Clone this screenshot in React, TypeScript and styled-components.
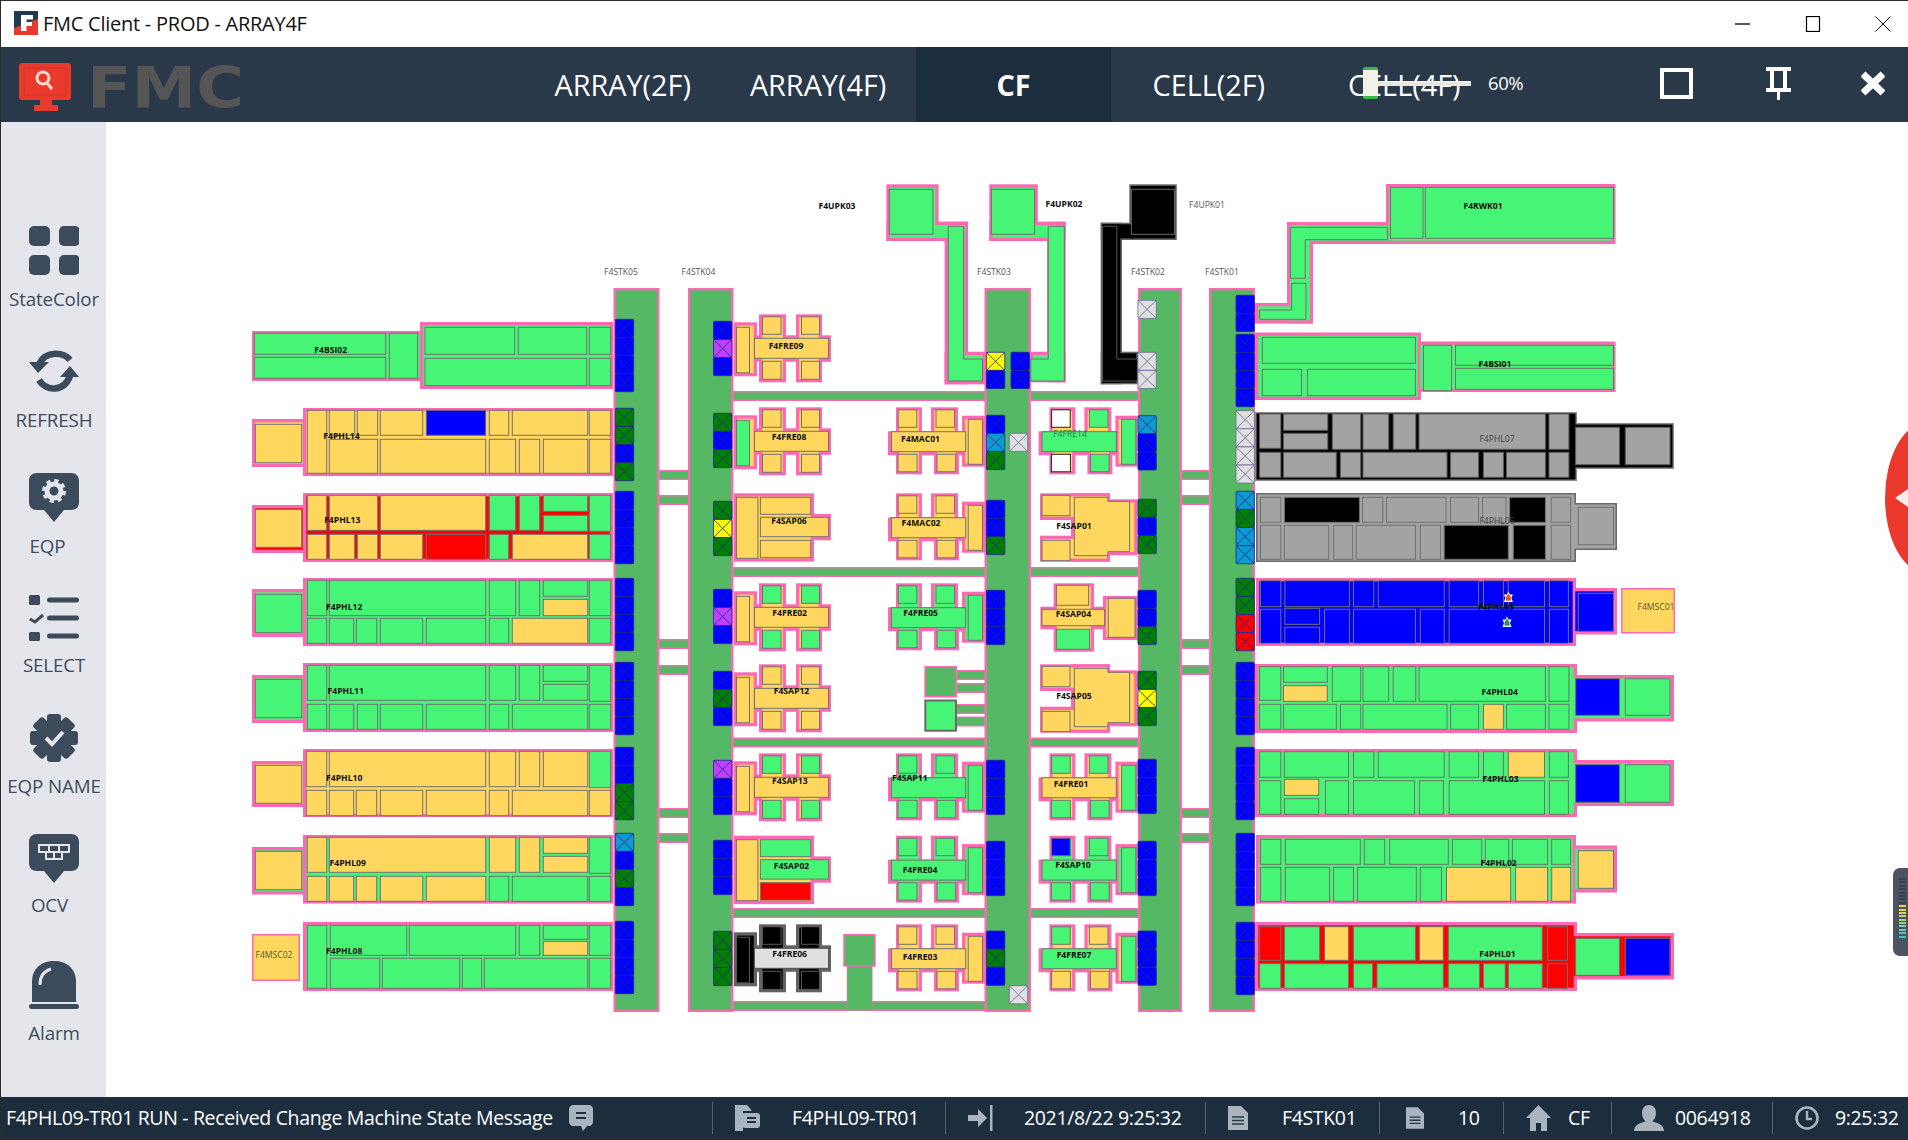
import React from "react"
import styled, { createGlobalStyle } from "styled-components"

const GlobalStyle = createGlobalStyle`
    html, body { margin: 0; padding: 0; background: #2b2b2b; overflow: hidden; }
    #root { width: 1908px; height: 1140px; }
`

const Window = styled.div`
    width: 1908px;
    height: 1140px;
    padding: 1px 0 2px 1px;
    box-sizing: border-box;
    display: flex;
    flex-direction: column;
    font-family: "Open Sans", "Noto Sans", sans-serif;
    overflow: hidden;
    position: relative;
`
const TitleBar = styled.div`
    height: 46px;
    flex: none;
    background: #fff;
    display: flex;
    align-items: center;
    padding: 0 0 2px 13px;
    box-sizing: border-box;
    gap: 5px;
    position: relative;
`
const TitleText = styled.span`
    font-size: 20px;
    color: #111;
    letter-spacing: -0.25px;
`
const WinButtons = styled.div`
    position: absolute;
    top: 0;
    right: 17px;
    height: 46px;
    display: flex;
    align-items: center;
    gap: 54px;
`
const Header = styled.header`
    height: 75px;
    flex: none;
    background: #29394a;
    display: flex;
    position: relative;
`
const LogoBox = styled.div`
    position: absolute;
    left: 18px;
    top: 0;
`
const Tabs = styled.nav`
    margin-left: 524px;
    display: flex;
`
const Tab = styled.div<{ $active?: boolean }>`
    width: 195.4px;
    height: 75px;
    line-height: 75px;
    text-align: center;
    color: #fff;
    font-size: 28.8px;
    font-weight: ${p => (p.$active ? 700 : 400)};
    background: ${p => (p.$active ? "#1c2d3e" : "transparent")};
`
const Opacity = styled.div`
    position: absolute;
    left: 1362px;
    top: 20px;
    width: 165px;
    height: 32px;
`
const Track = styled.div`
    position: absolute;
    left: 6px;
    top: 14px;
    width: 102px;
    height: 5px;
    background: #e8e8e2;
    border-top: 1px solid #f6f6f2;
    box-sizing: border-box;
`
const Thumb = styled.div`
    position: absolute;
    left: 0;
    top: 0;
    width: 15px;
    height: 32px;
    border-radius: 2px;
    background: #f1f1ea;
    border-top: 3px solid #3fb34f;
    border-bottom: 3px solid #3fb34f;
    box-sizing: border-box;
`
const Percent = styled.span`
    position: absolute;
    left: 125px;
    top: 3px;
    color: #fff;
    font-size: 18.5px;
    letter-spacing: -0.4px;
`
const HeaderTools = styled.div`
    position: absolute;
    right: 23px;
    top: 20px;
    display: flex;
    align-items: center;
    gap: 0;
`
const ToolSlot = styled.div<{ $w: number }>`
    width: ${p => p.$w}px;
    display: flex;
    justify-content: flex-end;
`
const Main = styled.main`
    flex: 1;
    display: flex;
    min-height: 0;
    background: #fff;
`
const Sidebar = styled.aside`
    width: 105px;
    flex: none;
    background: #e5e6eb;
    box-sizing: border-box;
    padding-top: 104px;
    display: flex;
    flex-direction: column;
`
const SideItem = styled.div<{ $h: number }>`
    height: ${p => p.$h}px;
    flex: none;
    display: flex;
    flex-direction: column;
    align-items: center;
`
const SideIcon = styled.div`
    height: 50px;
    width: 50px;
    color: #3c4b5c;
    margin-left: 1px;
`
const SideLabel = styled.span<{ $nudge?: number; $gap: number }>`
    margin-top: ${p => p.$gap}px;
    font-size: 18.8px;
    line-height: 25px;
    letter-spacing: -0.15px;
    color: #3d4c5e;
    white-space: nowrap;
    margin-left: ${p => p.$nudge ?? 1}px;
`
const MapArea = styled.section`
    flex: 1;
    position: relative;
    overflow: hidden;
`
const MapSvg = styled.svg`
    display: block;
`
const Collapse = styled.div`
    position: absolute;
    right: -60px;
    top: 301px;
    width: 83px;
    height: 150px;
    border-radius: 50%;
    background: #eb382c;
`
const CollapseArrow = styled.div`
    position: absolute;
    left: 10px;
    top: 66px;
    border-top: 9px solid transparent;
    border-bottom: 9px solid transparent;
    border-right: 13px solid #eee;
`
const Meter = styled.div`
    position: absolute;
    right: -8px;
    top: 746px;
    width: 23px;
    height: 88px;
    border-radius: 7px;
    background: #4c5361;
    box-sizing: border-box;
    padding: 10px 0 0 6px;
    display: flex;
    flex-direction: column;
    gap: 1.4px;
`
const MeterBar = styled.div<{ $c: string }>`
    width: 7px;
    height: 2px;
    flex: none;
    background: ${p => p.$c};
`
const StatusBar = styled.footer`
    height: 41px;
    flex: none;
    background: #1c2d3e;
    color: #fff;
    display: flex;
    align-items: center;
    font-size: 19.5px;
    letter-spacing: -0.35px;
    white-space: nowrap;
`
const Message = styled.div`
    width: 711px;
    flex: none;
    padding-left: 5px;
    box-sizing: border-box;
    display: flex;
    align-items: center;
    gap: 16px;
`
const StatusCell = styled.div<{ $w: number; $icon: number; $text: number; $pad?: number }>`
    width: ${p => p.$w}px;
    flex: none;
    box-sizing: border-box;
    height: 32px;
    border-left: 1px solid #55636f;
    display: grid;
    grid-template-columns: ${p => p.$icon}px auto;
    align-items: center;
    padding-left: ${p => p.$pad ?? 22}px;
    column-gap: ${p => p.$text}px;
`

const FILL: Record<string, string> = {
    g: "#46f576",
    y: "#ffd75e",
    b: "#0000ff",
    r: "#ff0000",
    k: "#000000",
    a: "#a3a3a3",
    l: "#e0e0e0",
    d: "#008000",
    s: "#0a9bd0",
    p: "#bf40ff",
    v: "#ffff00",
    w: "#ffffff",
    t: "#54b864",
}
const PINK = "#ff69b4"
const EDGE = "#707070"

type Box = [number, number, number, number]
type Cell = [number, number, number, number, string]
type Col = [number, number, string]

const row = (y0: number, y1: number, cols: Col[]): Cell[] => cols.map(c => [c[0], y0, c[1], y1, c[2]])

// one machine: a pink silhouette made of boxes, its state colour inside and its cells on top
function Unit({ blocks, bg, cells = [], line = PINK, inset = 3.3, edge = EDGE }: {
    blocks: Box[]
    bg: string
    cells?: Cell[]
    line?: string
    inset?: number
    edge?: string
}) {
    return (
        <g>
            {blocks.map((b, i) => <rect key={i} x={b[0]} y={b[1]} width={b[2] - b[0]} height={b[3] - b[1]} fill={line} />)}
            {blocks.map((b, i) => (
                <rect key={i} x={b[0] + inset} y={b[1] + inset} width={b[2] - b[0] - inset * 2} height={b[3] - b[1] - inset * 2} fill={FILL[bg]} />
            ))}
            {cells.map((c, i) => (
                <rect key={i} x={c[0]} y={c[1]} width={c[2] - c[0]} height={c[3] - c[1]} fill={FILL[c[4]]} stroke={c[4] === "w" ? "#222" : edge} strokeWidth={1} />
            ))}
        </g>
    )
}

function Ports({ x, y, states }: { x: number; y: number; states: string }) {
    const s = 18.1
    return (
        <g>
            {states.split("").map((c, i) => {
                const top = y + i * s
                const line = c === "l" ? "#6a6a9c" : "#1e2590"
                return (
                    <g key={i}>
                        <rect x={x} y={top} width={18.4} height={s} rx={1.5} fill={FILL[c]} stroke={line} strokeWidth={0.8} />
                        <path d={`M${x} ${top}L${x + 18.4} ${top + s}M${x + 18.4} ${top}L${x} ${top + s}`} stroke={line} strokeWidth={0.85} />
                    </g>
                )
            })}
        </g>
    )
}

function Stocker({ x0, x1 }: { x0: number; x1: number }) {
    return <Unit blocks={[[x0, 288, x1, 1012]]} bg="t" inset={2.3} />
}

function Bar({ x0, x1, y }: { x0: number; x1: number; y: number }) {
    return <Unit blocks={[[x0, y, x1, y + 10]]} bg="t" inset={1.4} />
}

function Tag({ x, y, children, dim }: { x: number; y: number; children: string; dim?: string }) {
    return (
        <text x={x} y={y + 3} textAnchor="middle" fontFamily="'Open Sans', sans-serif" fontSize={8.6} fontWeight={dim ? 400 : 700} fill={dim ?? "#101010"}>
            {children}
        </text>
    )
}

// FRE with the arm on the left (first process column)
function FreLeft({ top, bg = "y", c = "yyyyyy", dark }: { top: number; bg?: string; c?: string; dark?: boolean }) {
    return (
        <Unit
            blocks={[[734, top + 8, 757, top + 62], [754, top + 21, 831, top + 47.5], [759, top, 786, top + 68], [796, top, 822, top + 68]]}
            bg={bg}
            line={dark ? "#626262" : PINK}
            edge={dark ? "#555" : EDGE}
            cells={[
                [736.5, top + 13, 749.5, top + 58.5, c[0]],
                [762.5, top + 2.5, 781, top + 20, c[1]],
                [801.5, top + 2.5, 819.5, top + 20, c[2]],
                [754.5, top + 24, 828.5, top + 44, c[3]],
                [762.5, top + 47, 781, top + 65, c[4]],
                [801.5, top + 47, 819.5, top + 65, c[5]],
            ]}
        />
    )
}

// FRE with the arm on the right (next to a stocker); d/m shift it to the third column
function FreRight({ top, bg = "y", c = "yyyyyy", d = 0, m = 0 }: { top: number; bg?: string; c?: string; d?: number; m?: number }) {
    return (
        <Unit
            blocks={[
                [888 + m, top + 24, 968 + m, top + 48],
                [896 + d, top, 922 + d, top + 67],
                [931 + d, top, 958 + d, top + 32],
                [934 + d, top + 34, 959 + d, top + 67],
                [962 + d, top + 8.4, 985 + d - (d ? 1 : 0), top + 59.4],
            ]}
            bg={bg}
            cells={[
                [968.2 + d, top + 12, 982.5 + d, top + 57, c[0]],
                [898.2 + d, top + 2.5, 916.8 + d, top + 20, c[1]],
                [936 + d, top + 2.5, 954.6 + d, top + 20, c[2]],
                [891.4 + m, top + 24.4, 965.7 + m, top + 44.4, c[3]],
                [898 + d, top + 47, 917 + d, top + 64.5, c[4]],
                [937 + d, top + 47, 955.7 + d, top + 64.5, c[5]],
            ]}
        />
    )
}

function SapLeft({ top, c = "yyyy" }: { top: number; c?: string }) {
    return (
        <Unit
            blocks={[[734, top, 814, top + 68.4], [810, top + 20.7, 831, top + 47]]}
            bg="y"
            cells={[
                [736.4, top + 4, 757.9, top + 65, c[0]],
                [760.4, top + 4, 810.7, top + 21, c[1]],
                [760.4, top + 24, 828.6, top + 43.4, c[2]],
                [760.4, top + 47, 810.7, top + 64.4, c[3]],
            ]}
        />
    )
}

function SapRight({ top }: { top: number }) {
    const pts = [[1074.3, 4], [1107.9, 4], [1107.9, 8], [1129.6, 8], [1129.6, 58.4], [1107.9, 58.4], [1107.9, 62.4], [1074.3, 62.4]]
    return (
        <g>
            <Unit
                blocks={[[1040, top, 1110, top + 26.7], [1040, top + 42.4, 1110, top + 68.4], [1071, top, 1110, top + 68.4], [1071, top + 6, 1137.5, top + 62]]}
                bg="y"
                cells={[[1042, top + 2, 1070, top + 22.4, "y"], [1042, top + 47, 1070, top + 67.4, "y"]]}
            />
            <polygon points={pts.map(p => `${p[0]},${top + p[1]}`).join(" ")} fill={FILL.y} stroke={EDGE} />
        </g>
    )
}

const leftBlocks = (t: number, b: number, pt: number, pb: number): Box[] => [[303, t, 613, b], [252, pt, 306, pb]]

function LeftBays() {
    return (
        <g>
            <Unit
                blocks={[[252, 331, 423, 381], [420, 322, 613, 389]]}
                bg="g"
                cells={[
                    ...row(333.3, 354.3, [[254.3, 385.7, "g"]]),
                    ...row(357.3, 378.3, [[254.3, 385.7, "g"]]),
                    [389.3, 333.3, 417.7, 378.3, "g"],
                    ...row(327.3, 354.3, [[425, 514.7, "g"], [518.3, 586.7, "g"], [589.3, 610.7, "g"]]),
                    ...row(358.3, 385.7, [[425, 586.7, "g"], [589.3, 610.7, "g"]]),
                ]}
            />
            <Unit
                blocks={leftBlocks(408, 476, 419, 467)}
                bg="y"
                cells={[
                    [255.3, 424.3, 301.7, 462.7, "y"],
                    [307.3, 410.3, 326.7, 473.3, "y"],
                    ...row(410.3, 435.3, [[329.3, 354.7, "y"], [357.3, 377.7, "y"], [380.3, 422.7, "y"], [426.3, 485.7, "b"], [489.3, 508.7, "y"], [512.3, 587.7, "y"], [589.3, 610.7, "y"]]),
                    ...row(439.3, 473.3, [[329.3, 377.7, "y"], [380.3, 485.7, "y"], [489.3, 515.7, "y"], [519.3, 539.7, "y"], [543.3, 587.7, "y"], [589.3, 610.7, "y"]]),
                ]}
            />
            <Unit
                blocks={leftBlocks(493, 562, 505, 553)}
                bg="r"
                cells={[
                    [255.3, 509.3, 301.7, 547.3, "y"],
                    ...row(495.3, 530.3, [[307.3, 326.7, "y"], [329.3, 377.7, "y"], [380.3, 485.7, "y"], [489.3, 515.7, "g"], [519.3, 539.7, "g"]]),
                    [543.3, 495.3, 587.7, 511.3, "g"],
                    [543.3, 515.3, 587.7, 531.3, "g"],
                    [589.3, 495.3, 610.7, 531.3, "g"],
                    ...row(534.3, 559.3, [[307.3, 326.7, "y"], [329.3, 354.7, "y"], [357.3, 377.7, "y"], [380.3, 422.7, "y"], [426.3, 485.7, "r"], [489.3, 508.7, "g"], [512.3, 587.7, "y"], [589.3, 610.7, "g"]]),
                ]}
            />
            <Unit
                blocks={leftBlocks(578, 646, 589, 637)}
                bg="g"
                cells={[
                    [255.3, 594.3, 301.7, 632.7, "g"],
                    ...row(580.3, 615.7, [[307.3, 326.7, "g"], [329.3, 485.7, "g"], [489.3, 515.7, "g"], [519.3, 539.7, "g"], [589.3, 610.7, "g"]]),
                    [543.3, 580.3, 587.7, 596.3, "g"],
                    [543.3, 599.3, 587.7, 615.7, "y"],
                    ...row(618.3, 643.3, [[307.3, 326.7, "g"], [329.3, 353.7, "g"], [356.3, 376.7, "g"], [380.3, 422.7, "g"], [426.3, 485.7, "g"], [489.3, 508.7, "g"], [512.3, 587.7, "y"], [589.3, 610.7, "g"]]),
                ]}
            />
            <Unit
                blocks={leftBlocks(663, 732, 675, 723)}
                bg="g"
                cells={[
                    [255.3, 679.3, 301.7, 717.7, "g"],
                    ...row(665.3, 700.3, [[307.3, 326.7, "g"], [329.3, 485.7, "g"], [489.3, 515.7, "g"], [519.3, 539.7, "g"]]),
                    [543.3, 665.3, 587.7, 681.3, "g"],
                    [543.3, 684.3, 587.7, 700.3, "g"],
                    [589.3, 665.3, 610.7, 701.3, "g"],
                    ...row(704.3, 729.3, [[307.3, 326.7, "g"], [329.3, 353.7, "g"], [357.3, 377.7, "g"], [380.3, 422.7, "g"], [426.3, 485.7, "g"], [489.3, 508.7, "g"], [512.3, 587.7, "g"], [589.3, 610.7, "g"]]),
                ]}
            />
            <Unit
                blocks={leftBlocks(749, 817, 761, 807)}
                bg="y"
                cells={[
                    [255.3, 765.3, 301.7, 803.3, "y"],
                    ...row(751.3, 786.7, [[306.3, 326.7, "y"], [329.3, 485.7, "y"], [489.3, 515.7, "y"], [519.3, 539.7, "y"], [543.3, 587.7, "y"]]),
                    [589.3, 751.3, 610.7, 787.7, "g"],
                    ...row(790.3, 815.7, [[306.3, 326.7, "y"], [329.3, 353.7, "y"], [356.3, 376.7, "y"], [380.3, 422.7, "y"], [426.3, 485.7, "y"], [489.3, 508.7, "y"], [512.3, 587.7, "y"], [589.3, 610.7, "y"]]),
                ]}
            />
            <Unit
                blocks={leftBlocks(835, 903.5, 847, 894.5)}
                bg="g"
                cells={[
                    [255.3, 851.3, 301.7, 889.7, "y"],
                    ...row(837.3, 872.3, [[307.3, 326.7, "y"], [329.3, 485.7, "y"], [489.3, 515.7, "y"], [519.3, 539.7, "y"]]),
                    [543.3, 837.3, 587.7, 853.3, "y"],
                    [543.3, 856.3, 587.7, 872.3, "y"],
                    [589.3, 837.3, 610.7, 873.3, "g"],
                    ...row(876.3, 901.3, [[307.3, 326.7, "y"], [329.3, 353.7, "y"], [356.3, 376.7, "y"], [380.3, 422.7, "y"], [426.3, 485.7, "y"], [489.3, 508.7, "g"], [512.3, 587.7, "g"], [589.3, 610.7, "g"]]),
                ]}
            />
            <Unit
                blocks={[[303, 922, 613, 991]]}
                bg="g"
                cells={[
                    [307.3, 925.3, 326.7, 988.3, "g"],
                    ...row(925.3, 955.3, [[330.3, 406.7, "g"], [409.3, 515.7, "g"], [519.3, 539.7, "g"], [589.3, 610.7, "g"]]),
                    [543.3, 925.3, 587.7, 939.3, "g"],
                    [543.3, 941.3, 587.7, 955.3, "y"],
                    ...row(958.3, 988.3, [[330.3, 379.7, "g"], [382.3, 459.7, "g"], [462.3, 481.7, "g"], [484.3, 587.7, "g"], [589.3, 610.7, "g"]]),
                ]}
            />
            <Unit blocks={[[252, 934, 300, 981]]} bg="y" inset={1.5} />
        </g>
    )
}

const rightBlocksWide = (t: number, b: number, pt: number, pb: number): Box[] => [[1255, t, 1577, b], [1570, pt, 1674, pb]]
const rightBlocksShort = (t: number, b: number, pt: number, pb: number): Box[] => [[1256, t, 1576, b], [1572, pt, 1617, pb]]

function RightBays() {
    return (
        <g>
            <Unit
                blocks={[[1386, 184, 1615.5, 244], [1287, 222, 1392, 244], [1287, 222, 1313, 323.5], [1255, 303, 1313, 323.5]]}
                bg="g"
                cells={[
                    [1390.5, 187.3, 1423, 238.3, "g"],
                    [1425.3, 187.3, 1613.5, 238.3, "g"],
                ]}
            />
            <polygon points="1290.3,227.3 1387.4,227.3 1387.4,239.7 1305.2,239.7 1305.2,278.3 1290.3,278.3" fill={FILL.g} stroke={EDGE} />
            <polygon points="1291.6,283.3 1306,283.3 1306,319.3 1259.6,319.3 1259.6,310 1291.6,310" fill={FILL.g} stroke={EDGE} />
            <Unit
                blocks={[[1255, 332.5, 1421, 400], [1417, 341.5, 1615.5, 392]]}
                bg="g"
                cells={[
                    [1262.3, 337.3, 1415.4, 363.3, "g"],
                    [1262.3, 369.3, 1301.6, 395.7, "g"],
                    [1307.4, 369.3, 1415.4, 395.7, "g"],
                    [1423.5, 345.3, 1451.5, 390.7, "g"],
                    [1455.5, 345.3, 1613.5, 365.3, "g"],
                    [1455.5, 368.3, 1613.5, 389.3, "g"],
                ]}
            />
            <Unit
                blocks={rightBlocksWide(412, 481, 423, 469)}
                bg="k"
                line="#8a8a8a"
                inset={1.5}
                edge="#5c5c5c"
                cells={[
                    [1259.6, 414, 1280.8, 448.3, "a"],
                    [1283.5, 414, 1327.8, 430.3, "a"],
                    [1283.5, 433.3, 1327.8, 449.3, "a"],
                    ...row(414, 449.3, [[1332.3, 1360.7, "a"], [1363, 1388.7, "a"], [1393.2, 1415.8, "a"], [1419, 1545.4, "a"], [1549, 1568.9, "a"]]),
                    ...row(452.3, 477.3, [[1259.6, 1280.8, "a"], [1283.5, 1336.3, "a"], [1340.4, 1360.7, "a"], [1363, 1447, "a"], [1450.6, 1478.6, "a"], [1483.5, 1503.4, "a"], [1506.5, 1545.4, "a"], [1549, 1568.9, "a"]]),
                    ...row(427.3, 464.7, [[1575.6, 1619.4, "a"], [1625.3, 1670, "a"]]),
                ]}
            />
            <Unit
                blocks={rightBlocksShort(493, 562, 503, 550)}
                bg="a"
                line="#6a6a6a"
                inset={1.5}
                cells={[
                    ...row(497.3, 522.3, [[1260.5, 1280.8, "a"], [1284.4, 1359.4, "k"], [1362.5, 1382.8, "a"], [1386.5, 1446, "a"], [1450.6, 1478.6, "a"], [1482.6, 1506, "a"], [1509.7, 1545.4, "k"], [1551.2, 1570.6, "a"]]),
                    ...row(525.3, 559.3, [[1260.5, 1280.8, "a"], [1284.4, 1328.7, "a"], [1333.6, 1352.6, "a"], [1356.2, 1415.4, "a"], [1420.3, 1440.6, "a"], [1444.2, 1508.3, "k"], [1513.3, 1545.4, "k"], [1551.2, 1570.6, "a"]]),
                    [1578.3, 507.3, 1613.5, 544.7, "a"],
                ]}
            />
            <Unit
                blocks={rightBlocksShort(578, 646, 588, 634.5)}
                bg="b"
                cells={[
                    ...row(580.7, 606.7, [[1260.5, 1280.8, "b"], [1284.9, 1349.4, "b"], [1353.5, 1373.8, "b"], [1378.3, 1444.2, "b"], [1449.2, 1478.6, "b"], [1483.5, 1503.4, "b"], [1508.3, 1544.5, "b"], [1549.4, 1568.4, "b"]]),
                    ...row(609.3, 643.3, [[1260.5, 1280.8, "b"], [1324.6, 1349.4, "b"], [1353.5, 1415.4, "b"], [1420.3, 1444.2, "b"], [1449.2, 1544.5, "b"], [1549.4, 1568.4, "b"]]),
                    [1284.9, 608.3, 1319.6, 624.3, "b"],
                    [1284.9, 627.3, 1319.6, 643.3, "b"],
                    [1578.3, 593.3, 1613.5, 631.3, "b"],
                ]}
            />
            <Unit blocks={[[1621, 588, 1675, 633.5]]} bg="y" inset={1.5} />
            <Unit
                blocks={rightBlocksWide(664, 733, 675, 721.5)}
                bg="g"
                cells={[
                    [1259.6, 666.7, 1280.8, 700.3, "g"],
                    [1283.5, 666.7, 1327.3, 682.3, "g"],
                    [1283.5, 685.7, 1327.3, 701.3, "y"],
                    ...row(666.7, 701.3, [[1332.3, 1360.7, "g"], [1363, 1388.7, "g"], [1393.2, 1415.8, "g"], [1419, 1545.4, "g"], [1549, 1568.9, "g"]]),
                    ...row(704.3, 729.3, [[1259.6, 1280.8, "g"], [1283.5, 1336.3, "g"], [1340.4, 1360.7, "g"], [1363, 1447, "g"], [1450.6, 1478.6, "g"], [1483.5, 1503.4, "y"], [1506.5, 1545.4, "g"], [1549, 1568.9, "g"]]),
                    ...row(678.7, 715.3, [[1575.6, 1619.4, "b"], [1625.3, 1670, "g"]]),
                ]}
            />
            <Unit
                blocks={rightBlocksWide(749, 817, 760, 806)}
                bg="g"
                cells={[
                    ...row(751.7, 777.3, [[1259.6, 1280.8, "g"], [1284.4, 1348.5, "g"], [1353.5, 1373.8, "g"], [1378.3, 1444.2, "g"], [1449.2, 1478.6, "g"], [1483.5, 1503.4, "g"], [1508.3, 1544.5, "y"], [1549.4, 1568.4, "g"]]),
                    ...row(780.7, 814.3, [[1259.6, 1280.8, "g"], [1325.5, 1348.5, "g"], [1353.5, 1414.5, "g"], [1419.4, 1443.3, "g"], [1449.2, 1544.5, "g"], [1549.4, 1568.4, "g"]]),
                    [1284.4, 779.3, 1318.7, 795.3, "y"],
                    [1284.4, 798.7, 1318.7, 814.3, "g"],
                    ...row(764.7, 802.3, [[1575.6, 1619.4, "b"], [1625.3, 1670, "g"]]),
                ]}
            />
            <Unit
                blocks={rightBlocksShort(835, 903.5, 845.5, 892.5)}
                bg="g"
                cells={[
                    ...row(839.3, 864.3, [[1260.5, 1280.8, "g"], [1285.3, 1360.3, "g"], [1364.3, 1384.7, "g"], [1389.6, 1448.3, "g"], [1452.4, 1481.7, "g"], [1485.3, 1508.8, "g"], [1512.4, 1547.6, "g"], [1551.7, 1570.6, "g"]]),
                    ...row(867.3, 901.3, [[1260.5, 1280.8, "g"], [1285.3, 1329.6, "g"], [1333.6, 1353.5, "g"], [1357.6, 1416.3, "g"], [1420.3, 1441.5, "g"], [1446.5, 1510.6, "y"], [1515.6, 1547.6, "y"], [1551.7, 1570.6, "y"]]),
                    [1578.3, 850.7, 1613.5, 888.3, "y"],
                ]}
            />
            <Unit
                blocks={rightBlocksWide(922, 991, 933, 979.5)}
                bg="r"
                cells={[
                    ...row(926.7, 960.3, [[1259.6, 1280.8, "r"], [1284.4, 1319.6, "g"], [1324.6, 1348.5, "y"], [1353.5, 1415.4, "g"], [1419.4, 1443.3, "y"], [1448.3, 1542.2, "g"], [1547.6, 1567.5, "r"]]),
                    ...row(963.7, 988.3, [[1259.6, 1280.8, "g"], [1284.4, 1348.5, "g"], [1353.5, 1372.5, "g"], [1377, 1443.3, "g"], [1448.3, 1479.5, "g"], [1483.5, 1505.2, "g"], [1508.3, 1542.2, "g"], [1547.6, 1567.5, "r"]]),
                    ...row(938.3, 975.3, [[1575.6, 1619.4, "g"], [1625.3, 1670, "b"]]),
                ]}
            />
        </g>
    )
}

function Spark({ x, y, c }: { x: number; y: number; c: string }) {
    return (
        <g transform={`translate(${x} ${y})`}>
            <path d="M0 -5.5L1.5 -2.5L4.5 -2.5L3 1L4.5 5L-4.5 5L-3 1L-4.5 -2.5L-1.5 -2.5Z" fill="#fff" />
            <path d="M0 -3.5L2.5 0L2.5 3.8L-2.5 3.8L-2.5 0Z" fill={c} />
        </g>
    )
}

function FloorMap() {
    return (
        <MapSvg width={1802} height={975} viewBox="106 122 1802 975" aria-label="ARRAY4F floor map">
            {/* transfer lines between stockers */}
            {[470, 495, 639, 665, 808, 833].map(y => <Bar key={y} x0={658} x1={690} y={y} />)}
            {[470, 495, 639, 665, 808, 833].map(y => <Bar key={y} x0={1181} x1={1210} y={y} />)}
            {[391, 567, 737.5, 908].map(y => <Bar key={y} x0={732} x1={986} y={y} />)}
            {[391, 567, 737.5, 908].map(y => <Bar key={y} x0={1030} x1={1139} y={y} />)}
            <Bar x0={732} x1={986} y={1001} />
            {[670, 683, 704, 716.5].map(y => <Bar key={y} x0={956} x1={986} y={y} />)}

            <Stocker x0={613.5} x1={659.5} />
            <Stocker x0={688} x1={733.5} />
            <Stocker x0={984.5} x1={1031} />
            <Stocker x0={1138} x1={1182} />
            <Stocker x0={1209} x1={1255} />

            <LeftBays />
            <RightBays />

            <FreLeft top={314.3} />
            <FreLeft top={407.3} c="gyyyyy" />
            <SapLeft top={493.3} />
            <FreLeft top={583.3} c="yggygg" />
            <FreLeft top={664.3} />
            <FreLeft top={753.3} c="yggygg" />
            <SapLeft top={835.7} c="yggr" />
            <FreLeft top={924.3} bg="k" c="kkklkk" dark />

            <FreRight top={407.3} />
            <FreRight top={493.3} />
            <FreRight top={583.3} bg="g" c="gggggg" />
            <FreRight top={753.3} bg="g" c="gggggg" />
            <FreRight top={835.7} bg="g" c="gggggg" />
            <FreRight top={924.3} />

            <FreRight top={407.3} d={153.4} m={150.6} c="gwggwg" />
            <SapRight top={493.3} />
            <Unit
                blocks={[[1053.6, 583.3, 1094, 651.7], [1040.4, 606.7, 1107, 629.3], [1102.9, 596, 1137.5, 640]]}
                bg="y"
                cells={[
                    [1056.4, 585.3, 1088.6, 605.3, "y"],
                    [1042, 609.3, 1104.6, 625.7, "y"],
                    [1056.4, 629.3, 1089.6, 649.3, "g"],
                    [1108.2, 598.3, 1135, 637.3, "y"],
                ]}
            />
            <SapRight top={664.3} />
            <FreRight top={753.3} d={153.4} m={150.6} c="gggygg" />
            <FreRight top={835.7} d={153.4} m={150.6} bg="g" c="gbgggg" />
            <FreRight top={924.3} d={153.4} m={150.6} c="ggygyy" />

            {/* F4UPK03, 02, 01 */}
            <Unit blocks={[[886.4, 184.3, 938.6, 241], [886.4, 221.7, 968, 241], [944.6, 221.7, 968, 384.3], [944.6, 351.7, 986, 384.3]]} bg="g" />
            <rect x={889.3} y={189.3} width={43.6} height={45} fill={FILL.g} stroke={EDGE} />
            <polygon points="948.2,226.3 963.6,226.3 963.6,359 982.5,359 982.5,381 948.2,381" fill={FILL.g} stroke={EDGE} />
            <Unit blocks={[[989.3, 184.3, 1037.9, 241], [989.3, 221.7, 1065.7, 241], [1047.1, 221.7, 1065.7, 382.3], [1030, 351.7, 1065.7, 382.3]]} bg="g" />
            <rect x={991.4} y={189.3} width={43.2} height={45} fill={FILL.g} stroke={EDGE} />
            <polygon points="1048.2,226.3 1064.3,226.3 1064.3,381 1030.7,381 1030.7,359 1048.2,359" fill={FILL.g} stroke={EDGE} />
            <Unit blocks={[[1129.3, 184.3, 1176.8, 240], [1100.7, 222.7, 1135, 240], [1100.7, 222.7, 1122, 384.3], [1100.7, 351.7, 1138, 384.3]]} bg="k" line="#666" inset={1.6} />
            <rect x={1131.4} y={189.3} width={43.2} height={45} fill="#000" stroke="#666" />
            <polygon points="1102.5,226.3 1116.8,226.3 1116.8,359 1137.5,359 1137.5,381 1102.5,381" fill="#000" stroke="#555" />

            {/* small shuttle blocks */}
            <Unit blocks={[[924.3, 666, 957, 697.5]]} bg="t" inset={1.6} />
            <Unit blocks={[[924.3, 699.5, 957, 731.7]]} bg="g" inset={2} line="#6a6a6a" />
            <Unit blocks={[[846.8, 965, 872.5, 1011]]} bg="t" inset={0.6} />
            <Unit blocks={[[843.2, 934, 875.7, 966.7]]} bg="t" inset={1.6} />

            <Ports x={615.3} y={319.3} states="bbbb" />
            <Ports x={615.3} y={408.3} states="ddbd" />
            <Ports x={615.3} y={491.3} states="bbbb" />
            <Ports x={615.3} y={578.3} states="bbbb" />
            <Ports x={615.3} y={662.3} states="bbbb" />
            <Ports x={615.3} y={747.3} states="bbdd" />
            <Ports x={615.3} y={833.3} states="sbdb" />
            <Ports x={615.3} y={921.3} states="bbbb" />

            <Ports x={713.5} y={321.3} states="bpb" />
            <Ports x={713.5} y={413.3} states="dbd" />
            <Ports x={713.5} y={501.3} states="dvd" />
            <Ports x={713.5} y={589.3} states="bpb" />
            <Ports x={713.5} y={671.3} states="bdb" />
            <Ports x={713.5} y={760.3} states="pbb" />
            <Ports x={713.5} y={840.3} states="bbb" />
            <Ports x={713.5} y={931.3} states="ddd" />

            <Ports x={986.4} y={352.3} states="vb" />
            <Ports x={1011} y={352.3} states="bb" />
            <Ports x={986.4} y={415.3} states="bsd" />
            <Ports x={1009.3} y={433.3} states="l" />
            <Ports x={986.4} y={500.3} states="bbd" />
            <Ports x={986.4} y={590.3} states="bbb" />
            <Ports x={986.4} y={760.3} states="bbb" />
            <Ports x={986.4} y={841.3} states="bbb" />
            <Ports x={986.4} y={931} states="bdb" />
            <Ports x={1009.3} y={985.7} states="l" />

            <Ports x={1137.9} y={300.3} states="l" />
            <Ports x={1137.9} y={352.3} states="ll" />
            <Ports x={1137.9} y={415.7} states="sbb" />
            <Ports x={1137.9} y={499.3} states="dbd" />
            <Ports x={1137.9} y={590.3} states="bbd" />
            <Ports x={1137.9} y={671.3} states="dvd" />
            <Ports x={1137.9} y={759.3} states="bbb" />
            <Ports x={1137.9} y={841.3} states="bbb" />
            <Ports x={1137.9} y={931} states="bbb" />

            <Ports x={1236} y={295.3} states="bb" />
            <Ports x={1236} y={334.3} states="bbbb" />
            <Ports x={1236} y={410.7} states="llll" />
            <Ports x={1236} y={491.3} states="sdss" />
            <Ports x={1236} y={578.3} states="ddrr" />
            <Ports x={1236} y={662.3} states="bbbb" />
            <Ports x={1236} y={747.3} states="bbbb" />
            <Ports x={1236} y={833.3} states="bbbb" />
            <Ports x={1236} y={922.3} states="bbbb" />

            <Spark x={1508.4} y={597} c="#e8521e" />
            <Spark x={1507} y={622} c="#2f8f5c" />

            <Tag x={837} y={206}>F4UPK03</Tag>
            <Tag x={1064} y={204}>F4UPK02</Tag>
            <Tag x={1207} y={205} dim="#555">F4UPK01</Tag>
            <Tag x={621} y={271.5} dim="#555">F4STK05</Tag>
            <Tag x={698.5} y={271.5} dim="#555">F4STK04</Tag>
            <Tag x={994} y={271.5} dim="#555">F4STK03</Tag>
            <Tag x={1148} y={271.5} dim="#555">F4STK02</Tag>
            <Tag x={1222} y={271.5} dim="#555">F4STK01</Tag>
            <Tag x={330.7} y={350}>F4BSI02</Tag>
            <Tag x={341.5} y={436}>F4PHL14</Tag>
            <Tag x={342.3} y={520}>F4PHL13</Tag>
            <Tag x={344.2} y={607}>F4PHL12</Tag>
            <Tag x={345.7} y={691}>F4PHL11</Tag>
            <Tag x={344.2} y={778}>F4PHL10</Tag>
            <Tag x={347.7} y={863.3}>F4PHL09</Tag>
            <Tag x={344.2} y={951}>F4PHL08</Tag>
            <Tag x={274} y={955} dim="#5a5a3a">F4MSC02</Tag>
            <Tag x={786} y={346}>F4FRE09</Tag>
            <Tag x={789} y={437}>F4FRE08</Tag>
            <Tag x={920.5} y={439}>F4MAC01</Tag>
            <Tag x={1070} y={434} dim="#2a7a4c">F4FRE14</Tag>
            <Tag x={789} y={521}>F4SAP06</Tag>
            <Tag x={921} y={523}>F4MAC02</Tag>
            <Tag x={1074} y={526}>F4SAP01</Tag>
            <Tag x={789.7} y={613}>F4FRE02</Tag>
            <Tag x={920.7} y={613}>F4FRE05</Tag>
            <Tag x={1073.4} y={614}>F4SAP04</Tag>
            <Tag x={791.5} y={691}>F4SAP12</Tag>
            <Tag x={1074} y={696}>F4SAP05</Tag>
            <Tag x={789.8} y={781}>F4SAP13</Tag>
            <Tag x={909.8} y={778}>F4SAP11</Tag>
            <Tag x={1071} y={784}>F4FRE01</Tag>
            <Tag x={791.5} y={866}>F4SAP02</Tag>
            <Tag x={920} y={870}>F4FRE04</Tag>
            <Tag x={1073} y={865}>F4SAP10</Tag>
            <Tag x={789.7} y={954}>F4FRE06</Tag>
            <Tag x={920} y={957}>F4FRE03</Tag>
            <Tag x={1074} y={955}>F4FRE07</Tag>
            <Tag x={1483} y={206}>F4RWK01</Tag>
            <Tag x={1495} y={364}>F4BSI01</Tag>
            <Tag x={1497} y={439} dim="#444">F4PHL07</Tag>
            <Tag x={1497} y={520.7} dim="#444">F4PHL06</Tag>
            <Tag x={1496} y={607}>F4PHL05</Tag>
            <Tag x={1656} y={607} dim="#5a5a3a">F4MSC01</Tag>
            <Tag x={1499.7} y={692}>F4PHL04</Tag>
            <Tag x={1500.5} y={779}>F4PHL03</Tag>
            <Tag x={1498.6} y={863}>F4PHL02</Tag>
            <Tag x={1497.5} y={954}>F4PHL01</Tag>
        </MapSvg>
    )
}

function AppIcon() {
    return (
        <svg width={24} height={24} viewBox="0 0 24 24">
            <rect width={24} height={24} fill="#1f3a52" />
            <path d="M24 8V24H0V17Z" fill="#e63a2c" />
            <path d="M7 4H19V8.5H12.5V11H18V15H12.5V20H7Z" fill="#fff" />
        </svg>
    )
}

function LogoMark() {
    return (
        <svg width={232} height={75} viewBox="0 -14 232 75">
            <path d="M3 2H49C51 2 52 3 52 5V36C52 38 51 39 49 39H33V44H39V50H15V44H21V39H3C1 39 0 38 0 36V5C0 3 1 2 3 2Z" fill="#e93a2c" />
            <rect x={5} y={7} width={42} height={27} fill="none" stroke="#c9342a" strokeWidth={1} />
            <circle cx={24} cy={17} r={6} fill="none" stroke="#ffd8d2" strokeWidth={3} />
            <path d="M28 22L33 28" stroke="#ffd8d2" strokeWidth={3} />
            <text x={68} y={47} fontFamily="'DejaVu Sans', sans-serif" fontWeight={700} fontSize={57} fill="#555" textLength={157} lengthAdjust="spacingAndGlyphs">FMC</text>
        </svg>
    )
}

function StateColorIcon() {
    return (
        <svg width={50} height={50} viewBox="0 0 50 50" fill="currentColor">
            <rect x={0} y={0} width={21} height={20} rx={5} />
            <rect x={30} y={0} width={21} height={20} rx={5} />
            <rect x={0} y={29} width={21} height={20} rx={5} />
            <rect x={30} y={29} width={21} height={20} rx={5} />
        </svg>
    )
}

function RefreshIcon() {
    return (
        <svg width={50} height={50} viewBox="0 0 50 50" fill="none" stroke="currentColor">
            <path d="M41 11C35 3 17 1 10 15" strokeWidth={6.5} />
            <path d="M0 13H20L9 24Z" fill="currentColor" stroke="none" />
            <path d="M10 31C17 43 35 43 41 27" strokeWidth={6.5} />
            <path d="M50 28H31L41 17Z" fill="currentColor" stroke="none" />
        </svg>
    )
}

function BubbleIcon({ children }: { children: React.ReactNode }) {
    return (
        <svg width={50} height={50} viewBox="0 0 50 50">
            <path d="M8 0H42C47 0 50 3 50 8V29C50 34 47 37 42 37H35L25 49L15 37H8C3 37 0 34 0 29V8C0 3 3 0 8 0Z" fill="currentColor" />
            {children}
        </svg>
    )
}

function SelectIcon() {
    return (
        <svg width={50} height={50} viewBox="0 0 50 50" fill="currentColor">
            <rect x={0} y={0} width={11} height={10} rx={1.5} />
            <path d="M1 24L6 27L14 20" fill="none" stroke="currentColor" strokeWidth={3} />
            <rect x={0} y={37} width={11} height={9} rx={1.5} />
            <rect x={18} y={2.5} width={32} height={5} rx={2.5} />
            <rect x={18} y={20.5} width={32} height={5} rx={2.5} />
            <rect x={18} y={38.5} width={32} height={5} rx={2.5} />
        </svg>
    )
}

function GearCheckIcon() {
    const teeth = [0, 45, 90, 135]
    return (
        <svg width={50} height={50} viewBox="0 0 50 50">
            <g fill="currentColor">
                <circle cx={25} cy={24} r={18} />
                {teeth.map(a => <rect key={a} x={18} y={0} width={14} height={48} rx={3} transform={`rotate(${a} 25 24)`} />)}
            </g>
            <path d="M17 24L23 30L34 18" fill="none" stroke="#e5e6eb" strokeWidth={4} />
        </svg>
    )
}

function AlarmIcon() {
    return (
        <svg width={50} height={50} viewBox="0 0 50 50">
            <path d="M3 42V22C3 8 13 1 25 1S47 8 47 22V42Z" fill="currentColor" />
            <rect x={0} y={44} width={50} height={5} rx={2.5} fill="currentColor" />
            <path d="M11 25C11 16 15 11 22 9" fill="none" stroke="#e5e6eb" strokeWidth={3} />
        </svg>
    )
}

const STATUS_GREY = "#a9b4bf"

function DocIcon({ w = 20 }: { w?: number }) {
    return (
        <svg width={w} height={24} viewBox="0 0 20 24">
            <path d="M0 0H13L20 7V24H0Z" fill={STATUS_GREY} />
            <path d="M4 11H16M4 14.5H16M4 18H16" stroke="#26384a" strokeWidth={1.6} />
        </svg>
    )
}

function SideButton({ label, h, gap, nudge, children }: { label: string; h: number; gap: number; nudge?: number; children: React.ReactNode }) {
    return (
        <SideItem $h={h}>
            <SideIcon>{children}</SideIcon>
            <SideLabel $nudge={nudge} $gap={gap}>{label}</SideLabel>
        </SideItem>
    )
}

const METER = ["#3a404c", "#3a404c", "#3a404c", "#3a404c", "#3a404c", "#3a404c", "#3a404c", "#3a404c", "#e6d04c", "#e6d04c", "#d7d65c", "#c8d46a", "#b6d07a", "#9ccc8a", "#84c89c", "#6cc4ac", "#58c0bc", "#4cbcc8"]

export default function App() {
    return (
        <Window>
            <GlobalStyle />
            <TitleBar>
                <AppIcon />
                <TitleText>FMC Client - PROD - ARRAY4F</TitleText>
                <WinButtons>
                    <svg width={16} height={16} viewBox="0 0 16 16"><path d="M0 8H15" stroke="#000" strokeWidth={1.3} /></svg>
                    <svg width={16} height={16} viewBox="0 0 16 16"><rect x={1.5} y={0.5} width={13} height={15} fill="none" stroke="#000" strokeWidth={1.2} /></svg>
                    <svg width={16} height={16} viewBox="0 0 16 16"><path d="M0.5 0.5L15.5 15.5M15.5 0.5L0.5 15.5" stroke="#000" strokeWidth={0.9} /></svg>
                </WinButtons>
            </TitleBar>
            <Header>
                <LogoBox><LogoMark /></LogoBox>
                <Tabs>
                    <Tab>ARRAY(2F)</Tab>
                    <Tab>ARRAY(4F)</Tab>
                    <Tab $active>CF</Tab>
                    <Tab>CELL(2F)</Tab>
                    <Tab>CELL(4F)</Tab>
                </Tabs>
                <Opacity>
                    <Track />
                    <Thumb />
                    <Percent>60%</Percent>
                </Opacity>
                <HeaderTools>
                    <ToolSlot $w={33}>
                        <svg width={33} height={33} viewBox="0 0 33 33"><rect x={2} y={3} width={29} height={27} fill="none" stroke="#fff" strokeWidth={4} /></svg>
                    </ToolSlot>
                    <ToolSlot $w={98}>
                        <svg width={25} height={33} viewBox="0 0 25 33"><path d="M0 0H25V4H21V21H25V25H14V33H11V25H0V21H4V4H0ZM8 4V21H17V4Z" fill="#fff" fillRule="evenodd" /></svg>
                    </ToolSlot>
                    <ToolSlot $w={94}>
                        <svg width={24} height={25} viewBox="0 0 24 25"><path d="M2 3L22 22M22 3L2 22" stroke="#fff" strokeWidth={7} /></svg>
                    </ToolSlot>
                </HeaderTools>
            </Header>
            <Main>
                <Sidebar>
                    <SideButton label="StateColor" h={123} gap={11}><StateColorIcon /></SideButton>
                    <SideButton label="REFRESH" h={124} gap={9}><RefreshIcon /></SideButton>
                    <SideButton label="EQP" h={122} gap={11} nudge={-12}>
                        <BubbleIcon>
                            <circle cx={25} cy={18} r={7} fill="none" stroke="#e5e6eb" strokeWidth={5} />
                            <circle cx={25} cy={18} r={10.5} fill="none" stroke="#e5e6eb" strokeWidth={3} strokeDasharray="4.2 4.05" />
                        </BubbleIcon>
                    </SideButton>
                    <SideButton label="SELECT" h={119} gap={8}><SelectIcon /></SideButton>
                    <SideButton label="EQP NAME" h={120} gap={10}><GearCheckIcon /></SideButton>
                    <SideButton label="OCV" h={126} gap={9} nudge={-8}>
                        <BubbleIcon>
                            <path d="M10 11H40V18H33V25H17V18H10ZM20 11V18M30 11V18M17 18H33M25 18V25" fill="none" stroke="#e5e6eb" strokeWidth={2} />
                        </BubbleIcon>
                    </SideButton>
                    <SideButton label="Alarm" h={120} gap={11}><AlarmIcon /></SideButton>
                </Sidebar>
                <MapArea>
                    <FloorMap />
                    <Collapse><CollapseArrow /></Collapse>
                    <Meter>{METER.map((c, i) => <MeterBar key={i} $c={c} />)}</Meter>
                </MapArea>
            </Main>
            <StatusBar>
                <Message>
                    <span>F4PHL09-TR01 RUN - Received Change Machine State Message</span>
                    <svg width={24} height={26} viewBox="0 0 24 26">
                        <path d="M4 0H20C22 0 24 2 24 4V17C24 19 22 21 20 21H18L14 26L12 21H4C2 21 0 19 0 17V4C0 2 2 0 4 0Z" fill={STATUS_GREY} />
                        <path d="M7 8H17M7 13H17" stroke="#1c2d3e" strokeWidth={2.2} />
                    </svg>
                </Message>
                <StatusCell $w={233} $icon={25} $text={32}>
                    <svg width={25} height={26} viewBox="0 0 25 26">
                        <path d="M0 0H12L17 6H8V26H0Z" fill={STATUS_GREY} />
                        <rect x={7} y={8} width={18} height={15} rx={3} fill={STATUS_GREY} />
                        <path d="M12 13H21M12 17H21" stroke="#1c2d3e" strokeWidth={1.8} />
                    </svg>
                    <span>F4PHL09-TR01</span>
                </StatusCell>
                <StatusCell $w={260} $icon={26} $text={30}>
                    <svg width={26} height={26} viewBox="0 0 26 26">
                        <path d="M0 10H10V4L19 13L10 22V16H0Z" fill={STATUS_GREY} />
                        <rect x={22} y={0} width={2.5} height={26} fill={STATUS_GREY} />
                    </svg>
                    <span>2021/8/22 9:25:32</span>
                </StatusCell>
                <StatusCell $w={174} $icon={20} $text={34}>
                    <DocIcon />
                    <span>F4STK01</span>
                </StatusCell>
                <StatusCell $w={124} $icon={18} $text={34} $pad={26}>
                    <DocIcon w={18} />
                    <span>10</span>
                </StatusCell>
                <StatusCell $w={108} $icon={25} $text={17}>
                    <svg width={25} height={26} viewBox="0 0 25 26">
                        <path d="M12.5 0L25 13H21V26H15V18H10V26H4V13H0Z" fill={STATUS_GREY} />
                    </svg>
                    <span>CF</span>
                </StatusCell>
                <StatusCell $w={161} $icon={30} $text={11}>
                    <svg width={30} height={26} viewBox="0 0 30 26">
                        <path d="M15 0C20 0 22 4 22 8C22 12 20 15 18.5 16.5C24 18 30 20 30 26H0C0 20 6 18 11.5 16.5C10 15 8 12 8 8C8 4 10 0 15 0Z" fill={STATUS_GREY} />
                    </svg>
                    <span>0064918</span>
                </StatusCell>
                <StatusCell $w={136} $icon={23} $text={17}>
                    <svg width={24} height={26} viewBox="0 0 24 26">
                        <circle cx={12} cy={13} r={10.5} fill="none" stroke={STATUS_GREY} strokeWidth={2.6} />
                        <path d="M12 6V14H17" fill="none" stroke={STATUS_GREY} strokeWidth={2.4} />
                    </svg>
                    <span>9:25:32</span>
                </StatusCell>
            </StatusBar>
        </Window>
    )
}
